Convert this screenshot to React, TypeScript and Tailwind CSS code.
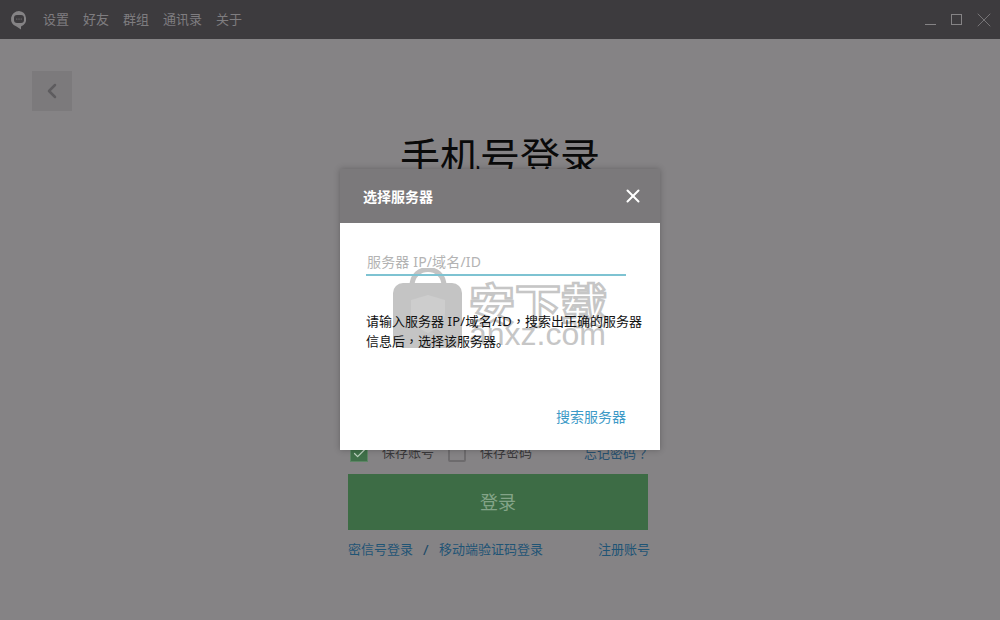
import React from 'react';
import { ChevronLeft, X, Check } from 'lucide-react';

const font = "font-['Noto_Sans','Noto_Sans_CJK_SC',sans-serif]";
const menus = ['设置', '好友', '群组', '通讯录', '关于'];

function Logo() {
  return (
    <svg width="18" height="20" viewBox="0 0 18 20">
      <path d="M9 1a8 8 0 0 0-2.5 15.6L11 19.6v-3.2A8 8 0 0 0 9 1z" fill="#858385" />
      <rect x="4" y="5" width="10" height="8" rx="3" fill="#3d3b3e" />
      <circle cx="6.8" cy="9" r=".6" fill="#858385" />
      <circle cx="9" cy="9" r=".6" fill="#858385" />
      <circle cx="11.2" cy="9" r=".6" fill="#858385" />
    </svg>
  );
}

function Punct({ children }: { children: string }) {
  return <span className="font-['Noto_Sans_CJK_TC',sans-serif]">{children}</span>;
}

function Watermark() {
  return (
    <div className="absolute left-[52px] top-[47px] flex items-start pointer-events-none font-['Noto_Sans_CJK_SC',sans-serif]">
      <svg width="72" height="82" viewBox="0 0 72 82" className="mt-[-2px] shrink-0">
        <path d="M20 18c0-22 32-22 32 0" fill="none" stroke="#c4c4c4" strokeWidth="5" />
        <rect x="1" y="15" width="69" height="65" rx="10" fill="#c4c4c4" />
        <path d="M36 27l17 5v13c0 10-8 16-17 20-9-4-17-10-17-20V32z" fill="#cdcdcd" />
      </svg>
      <div className="ml-[5px] pt-[9px]">
        <div className="text-[46px] leading-[46px] font-bold text-white [-webkit-text-stroke:2.5px_#c6c6c6] whitespace-nowrap">安下载</div>
        <div className="mt-[-6px] text-[32px] leading-[30px] text-[#c6c6c6] font-['Liberation_Sans',sans-serif] whitespace-nowrap">anxz.com</div>
      </div>
    </div>
  );
}

export default function App() {
  return (
    <div className={`${font} w-[1000px] h-[620px] relative overflow-hidden bg-[#858385] flex flex-col`}>
      <header className="h-[39px] shrink-0 bg-[#3d3b3e] flex items-center pl-[10px] pr-[4px]">
        <Logo />
        <nav className="flex gap-[14px] ml-[15px] text-[13px] text-[#7f7d80]">
          {menus.map((m) => (
            <span key={m}>{m}</span>
          ))}
        </nav>
        <div className="ml-auto flex items-center text-[#858385]">
          <span className="w-[11px] h-px bg-[#858385] mt-[10px]" />
          <span className="ml-[15px] w-[11px] h-[11px] border border-[#858385]" />
          <X size={24} strokeWidth={0.8} className="ml-[10px]" />
        </div>
      </header>

      <main className="flex-1 flex flex-col px-[32px] pt-[32px]">
        <button className="w-[40px] h-[40px] bg-[#7c7a7c] flex items-center justify-center text-[#5e5c5f]">
          <ChevronLeft size={24} strokeWidth={2.5} />
        </button>
        <h1 className="mt-[11px] ml-[336px] w-[264px] text-[40px] leading-[70px] text-[#0a0a0a] text-center">手机号登录</h1>
        <div className="mt-[250px] ml-[316px] w-[302px] flex flex-col">
          <div className="h-[22px] flex items-center text-[13px] text-[#3a393b]">
            <span className="ml-[2px] w-[18px] h-[18px] bg-[#3f7049] border border-[#5d8565] flex items-center justify-center text-[#b9cfbd]">
              <Check size={15} strokeWidth={2} />
            </span>
            <span className="ml-[14px]">保存账号</span>
            <span className="ml-[14px] w-[18px] h-[18px] border-2 border-[#6d6b6d] rounded-[2px]" />
            <span className="ml-[14px]">保存密码</span>
            <span className="ml-auto mr-[1px] text-[#27506e]">忘记密码<Punct>？</Punct></span>
          </div>
          <button className="mt-[10px] w-[300px] h-[56px] bg-[#3d6c45] text-[18px] text-[#84a488]">登录</button>
          <div className="mt-[9px] flex items-center text-[13px] leading-[20px] text-[#1f5475]">
            <span>密信号登录</span>
            <span className="ml-[10px] w-[5px] text-[#1d4a68] text-[15px]">/</span>
            <span className="ml-[11px]">移动端验证码登录</span>
            <span className="ml-auto">注册账号</span>
          </div>
        </div>
      </main>

      <div className="absolute left-[340px] top-[169px] w-[320px] shadow-[0_0_6px_rgba(0,0,0,0.25)]">
        <div className="h-[54px] bg-[#7b797b] flex items-center justify-between pl-[23px] pr-[16px]">
          <span className="text-[14px] font-bold text-white">选择服务器</span>
          <X size={22} strokeWidth={2.2} className="text-white" />
        </div>
        <div className="relative h-[227px] bg-white px-[26px]">
          <Watermark />
          <div className="relative">
            <div className="h-[53px] border-b-2 border-[#7ec3d2] pl-px pt-[29px] w-[260px] text-[14px] leading-[20px] tracking-[0.15px] text-[#b3b3b3]">服务器 IP/域名/ID</div>
            <p className="mt-[35px] w-[280px] text-[13px] leading-[20px] text-[#111]">请输入服务器 <span className="tracking-[0.35px]">IP/域名/ID</span><Punct>，</Punct>搜索出正确的服务器信息后<Punct>，</Punct>选择该服务器。</p>
            <div className="mt-[56px] w-[260px] text-right text-[14px] leading-[20px] text-[#3d9ac7]">搜索服务器</div>
          </div>
        </div>
      </div>
    </div>
  );
}
